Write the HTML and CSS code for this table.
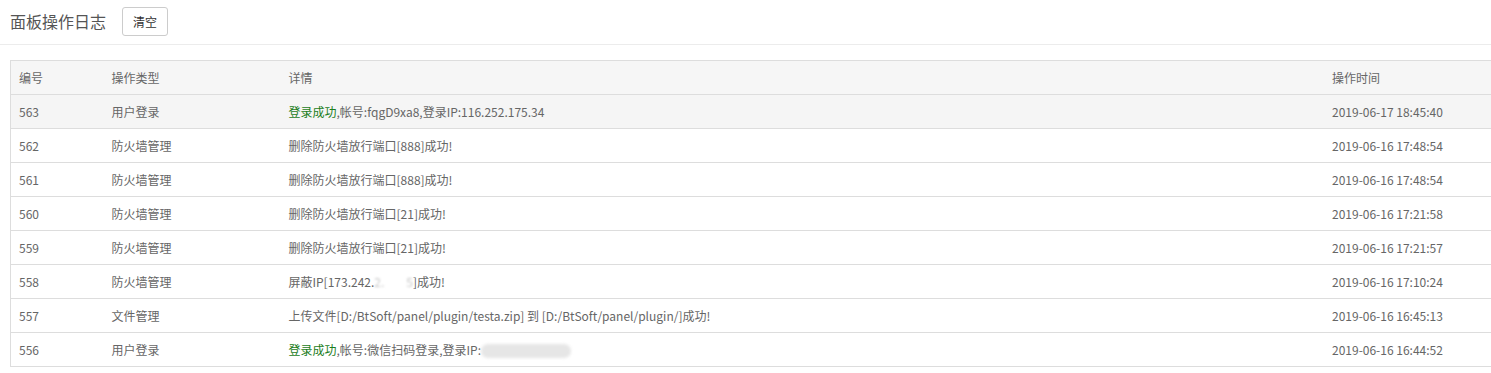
FILE: index.html
```html
<!DOCTYPE html>
<html lang="zh-CN">
<head>
<meta charset="utf-8">
<title>面板操作日志</title>
<link rel="stylesheet" href="styles.css">
</head>
<body>
<div class="title-bar">
  <span class="title">面板操作日志</span>
  <button class="btn">清空</button>
</div>
<div class="table-wrap">
  <table class="log-table">
    <colgroup>
      <col class="c-id"><col class="c-type"><col class="c-detail"><col class="c-time">
    </colgroup>
    <thead>
      <tr><th>编号</th><th>操作类型</th><th>详情</th><th>操作时间</th></tr>
    </thead>
    <tbody>
      <tr class="hover"><td>563</td><td>用户登录</td><td><span class="ok">登录成功</span>,帐号:fqgD9xa8,登录IP:116.252.175.34</td><td>2019-06-17 18:45:40</td></tr>
      <tr><td>562</td><td>防火墙管理</td><td>删除防火墙放行端口[888]成功!</td><td>2019-06-16 17:48:54</td></tr>
      <tr><td>561</td><td>防火墙管理</td><td>删除防火墙放行端口[888]成功!</td><td>2019-06-16 17:48:54</td></tr>
      <tr><td>560</td><td>防火墙管理</td><td>删除防火墙放行端口[21]成功!</td><td>2019-06-16 17:21:58</td></tr>
      <tr><td>559</td><td>防火墙管理</td><td>删除防火墙放行端口[21]成功!</td><td>2019-06-16 17:21:57</td></tr>
      <tr><td>558</td><td>防火墙管理</td><td>屏蔽IP[173.242.<span class="smudge">2.</span><span class="gap"></span><span class="smudge">5</span>]成功!</td><td>2019-06-16 17:10:24</td></tr>
      <tr><td>557</td><td>文件管理</td><td>上传文件[D:/BtSoft/panel/plugin/testa.zip] 到 [D:/BtSoft/panel/plugin/]成功!</td><td>2019-06-16 16:45:13</td></tr>
      <tr><td>556</td><td>用户登录</td><td><span class="ok">登录成功</span>,帐号:微信扫码登录,登录IP:<span class="blob"></span></td><td>2019-06-16 16:44:52</td></tr>
    </tbody>
  </table>
</div>
</body>
</html>
```
FILE: styles.css
```css
html, body {
  margin: 0;
  padding: 0;
  background: #fff;
  font-family: "Noto Sans CJK SC", "Noto Sans", sans-serif;
  color: #666;
}
.title-bar {
  height: 44px;
  display: flex;
  align-items: center;
  padding-left: 10px;
  border-bottom: 1px solid #ececec;
}
.title {
  font-size: 16px;
  color: #555;
  margin-top: -2px;
}
.btn {
  margin-left: 16px;
  margin-top: -1px;
  height: 29px;
  width: 46px;
  padding: 0;
  border: 1px solid #ccc;
  border-radius: 3px;
  background: #fff;
  color: #333;
  font-family: inherit;
  font-size: 12px;
}
.table-wrap {
  margin: 15px 0 0 10px;
}
.log-table {
  width: 1481px;
  border-collapse: collapse;
  table-layout: fixed;
  font-size: 12px;
  border-left: 1px solid #ddd;
  border-top: 1px solid #ddd;
}
.c-id { width: 93px; }
.c-type { width: 177px; }
.c-time { width: 167px; }
.log-table th, .log-table td {
  height: 33px;
  padding: 0 0 0 8px;
  text-align: left;
  font-weight: normal;
  border-bottom: 1px solid #ddd;
  white-space: nowrap;
  color: #666;
}
.log-table thead th {
  background: #f6f6f6;
}
.log-table tr.hover td {
  background: #f5f5f5;
}
.ok { color: #1b7d1b; }
.smudge {
  color: #c8c8c8;
  filter: blur(1px);
}
.gap {
  display: inline-block;
  width: 22px;
}
.blob {
  display: inline-block;
  width: 90px;
  height: 14px;
  vertical-align: middle;
  border-radius: 7px;
  background: #e6e6e6;
  filter: blur(1.5px);
}
```
